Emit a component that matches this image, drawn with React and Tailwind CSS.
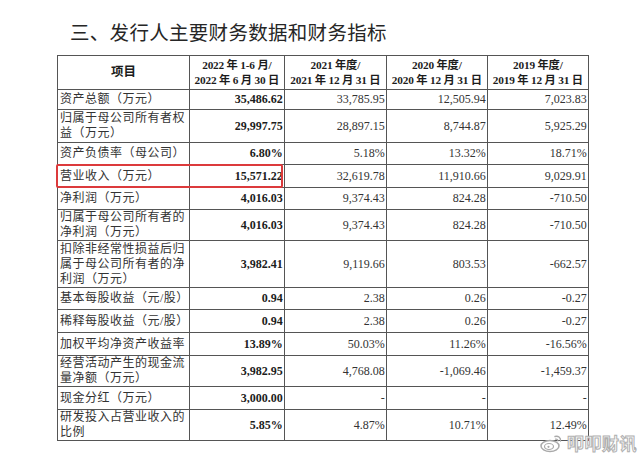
const rows = [
  { label: ['资产总额（万元）'], h: 20, v: ['35,486.62', '33,785.95', '12,505.94', '7,023.83'] },
  { label: ['归属于母公司所有者权', '益（万元）'], h: 33, v: ['29,997.75', '28,897.15', '8,744.87', '5,925.29'] },
  { label: ['资产负债率（母公司）'], h: 22, v: ['6.80%', '5.18%', '13.32%', '18.71%'] },
  { label: ['营业收入（万元）'], h: 23, v: ['15,571.22', '32,619.78', '11,910.66', '9,029.91'] },
  { label: ['净利润（万元）'], h: 22, v: ['4,016.03', '9,374.43', '824.28', '-710.50'] },
  { label: ['归属于母公司所有者的', '净利润（万元）'], h: 31, v: ['4,016.03', '9,374.43', '824.28', '-710.50'] },
  { label: ['扣除非经常性损益后归', '属于母公司所有者的净', '利润（万元）'], h: 47, v: ['3,982.41', '9,119.66', '803.53', '-662.57'] },
  { label: ['基本每股收益（元/股）'], h: 22, v: ['0.94', '2.38', '0.26', '-0.27'] },
  { label: ['稀释每股收益（元/股）'], h: 23, v: ['0.94', '2.38', '0.26', '-0.27'] },
  { label: ['加权平均净资产收益率'], h: 23, v: ['13.89%', '50.03%', '11.26%', '-16.56%'] },
  { label: ['经营活动产生的现金流', '量净额（万元）'], h: 30, v: ['3,982.95', '4,768.08', '-1,069.46', '-1,459.37'] },
  { label: ['现金分红（万元）'], h: 23, v: ['3,000.00', '-', '-', '-'] },
  { label: ['研发投入占营业收入的', '比例'], h: 31, v: ['5.85%', '4.87%', '10.71%', '12.49%'] },
];

const heads = [
  ['2022 年 1-6 月/', '2022 年 6 月 30 日'],
  ['2021 年度/', '2021 年 12 月 31 日'],
  ['2020 年度/', '2020 年 12 月 31 日'],
  ['2019 年度/', '2019 年 12 月 31 日'],
];

function WeiboLogo() {
  return (
    <svg width="24" height="20" viewBox="0 0 24 20" fill="none">
      <ellipse cx="10" cy="13" rx="9" ry="5.5" stroke="#aaa" strokeWidth="1.5" fill="#fff" />
      <ellipse cx="9" cy="13.5" rx="4.5" ry="3" stroke="#aaa" strokeWidth="1.2" />
      <circle cx="8.5" cy="13.8" r="1.1" fill="#aaa" />
      <path d="M15 3.5c3-1 6 1 5.5 4.5" stroke="#aaa" strokeWidth="1.4" strokeLinecap="round" />
      <path d="M15.5 6.2c1.4-.4 2.6.5 2.4 1.8" stroke="#aaa" strokeWidth="1.2" strokeLinecap="round" />
    </svg>
  );
}

export default function App() {
  return (
    <div className="relative w-[640px] h-[456px] bg-white overflow-hidden text-[#1c1c1c]">
      <h1 className="pl-[70px] pt-[20px] text-[19.5px] leading-[24px] tracking-[0.3px] font-normal text-[#262626]" style={{ fontFamily: '"Noto Sans CJK SC", sans-serif' }}>
        三、发行人主要财务数据和财务指标
      </h1>

      <table
        className="ml-[57px] mt-[11px] table-fixed border-collapse text-[12px] leading-[15px]"
        style={{ fontFamily: '"Liberation Serif", "Noto Sans CJK SC", serif' }}
      >
        <colgroup>
          <col className="w-[128px]" />
          <col className="w-[95px]" />
          <col className="w-[102px]" />
          <col className="w-[101px]" />
          <col className="w-[101px]" />
        </colgroup>
        <thead>
          <tr className="h-[34px]">
            <th className="border border-[#555] font-bold text-center text-[12.5px]">项目</th>
            {heads.map((hd, i) => (
              <th key={i} className="border border-[#555] font-bold text-center whitespace-nowrap px-0 text-[11.3px] leading-[15px] tracking-[-0.2px]">
                {hd[0]}
                <br />
                {hd[1]}
              </th>
            ))}
          </tr>
        </thead>
        <tbody>
          {rows.map((r, i) => (
            <tr key={i} style={{ height: r.h }}>
              <td className="border border-[#555] pl-[2px] text-left align-middle tracking-[0.5px] text-[#333] whitespace-nowrap">
                {r.label.map((l, j) => (
                  <div key={j}>{l}</div>
                ))}
              </td>
              {r.v.map((v, j) => (
                <td key={j} className={`border border-[#555] pr-[1px] text-right align-middle ${j === 0 ? 'font-bold' : 'text-[#333]'}`}>
                  {v}
                </td>
              ))}
            </tr>
          ))}
        </tbody>
      </table>

      {/* red highlight on 营业收入 */}
      <div className="absolute left-[56px] top-[164px] w-[227px] h-[24px] border-2 border-[#dc3a3c] rounded-[2px]" />

      {/* watermark */}
      <div className="absolute left-[540px] top-[433px] flex items-center gap-[3px]">
        <WeiboLogo />
        <span
          className="text-[17px] leading-[20px] text-white font-bold tracking-[0.5px]"
          style={{ fontFamily: '"Noto Sans CJK SC", sans-serif', WebkitTextStroke: '1px #b0b0b0' }}
        >
          叩叩财讯
        </span>
      </div>
    </div>
  );
}
